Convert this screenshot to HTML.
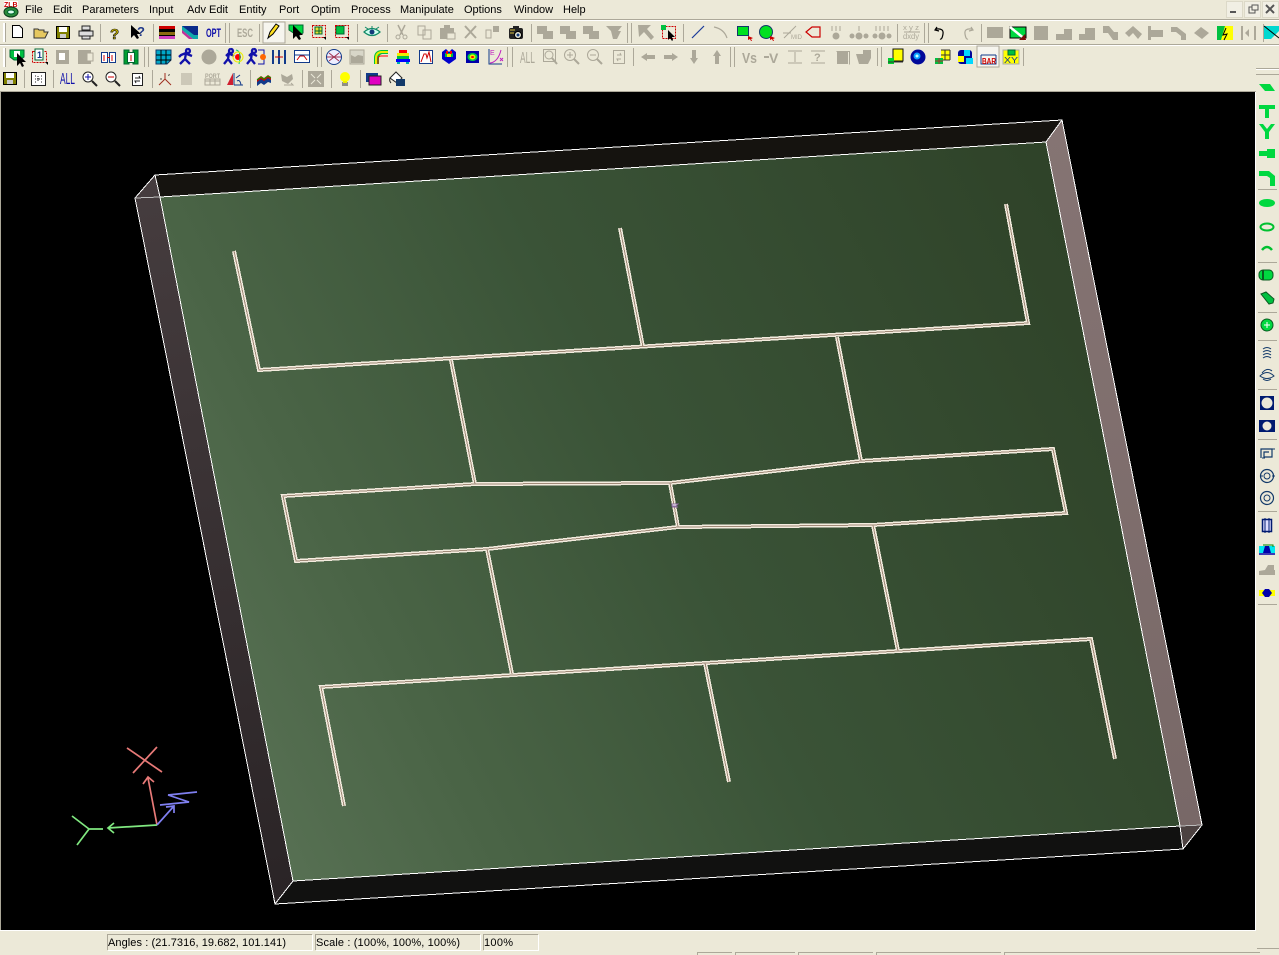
<!DOCTYPE html>
<html><head><meta charset="utf-8"><title>ZLB</title>
<style>
html,body{margin:0;padding:0;background:#ece9d8;overflow:hidden}
svg{display:block;position:absolute;left:0;top:0}
text{font-family:"Liberation Sans",sans-serif}
.m text{font-size:11px;fill:#000}
</style></head><body>
<svg width="1279" height="955" viewBox="0 0 1279 955" xmlns="http://www.w3.org/2000/svg">
<defs>
<linearGradient id="fg" gradientUnits="userSpaceOnUse" x1="200" y1="880" x2="1150" y2="400">
<stop offset="0" stop-color="#5c7558"/><stop offset=".26" stop-color="#4a6446"/><stop offset=".55" stop-color="#3a5337"/><stop offset="1" stop-color="#2f4329"/></linearGradient>
<linearGradient id="lw" gradientUnits="userSpaceOnUse" x1="140" y1="200" x2="280" y2="900"><stop offset="0" stop-color="#453c3e"/><stop offset="1" stop-color="#2a2426"/></linearGradient>
<linearGradient id="rw" gradientUnits="userSpaceOnUse" x1="1050" y1="130" x2="1190" y2="830"><stop offset="0" stop-color="#857473"/><stop offset="1" stop-color="#786867"/></linearGradient>
</defs>
<rect width="1279" height="955" fill="#ece9d8"/>
<!-- menu -->
<g class="m">
<text x="25" y="13">File</text><text x="53" y="13">Edit</text><text x="82" y="13">Parameters</text><text x="149" y="13">Input</text><text x="187" y="13">Adv Edit</text><text x="239" y="13">Entity</text><text x="279" y="13">Port</text><text x="311" y="13">Optim</text><text x="351" y="13">Process</text><text x="400" y="13">Manipulate</text><text x="464" y="13">Options</text><text x="514" y="13">Window</text><text x="563" y="13">Help</text>
</g>
<!-- logo -->
<g><rect x="4" y="1" width="14" height="6" fill="#fff"/><text x="4" y="7" font-size="7" font-weight="bold" fill="#c00">ZLB</text>
<ellipse cx="11" cy="12" rx="7" ry="5" fill="#2a8a3a" stroke="#0a3a1a"/><ellipse cx="11" cy="12" rx="3.5" ry="2" fill="#dfe" stroke="#063"/></g>
<!-- window buttons -->
<g shape-rendering="crispEdges"><rect x="1226.500" y="1.500" width="16" height="16" fill="#f1efe4" stroke="#dcd9c8"/><rect x="1244.500" y="1.500" width="16" height="16" fill="#f1efe4" stroke="#dcd9c8"/><rect x="1262.500" y="1.500" width="16" height="16" fill="#f1efe4" stroke="#dcd9c8"/>
<rect x="1230" y="11" width="6" height="2" fill="#555"/>
<rect x="1249" y="7" width="6" height="6" fill="none" stroke="#555"/><rect x="1252" y="5" width="6" height="5" fill="#f1efe4" stroke="#555"/></g>
<path d="M1266 5l8 8M1274 5l-8 8" stroke="#555" stroke-width="2"/>
<!-- bars -->
<g shape-rendering="crispEdges">
<rect x="0" y="19" width="1279" height="1" fill="#aca899"/><rect x="0" y="20" width="1279" height="1" fill="#fff"/>
<rect x="0" y="44" width="1279" height="1" fill="#aca899"/><rect x="0" y="45" width="1279" height="1" fill="#fff"/>
<rect x="1256" y="68" width="23" height="1" fill="#aca899"/><rect x="1256" y="69" width="23" height="1" fill="#fff"/>
<rect x="1256" y="74" width="23" height="1" fill="#aca899"/>
<!-- grips & seps -->
<g fill="#fff">
<rect x="3" y="23" width="2" height="19"/><rect x="3" y="48" width="2" height="19"/>
</g>
<g fill="#aca899">
<rect x="5" y="23" width="1" height="19"/><rect x="5" y="48" width="1" height="19"/>
<rect x="100" y="24" width="1" height="18"/><rect x="153" y="24" width="1" height="18"/><rect x="225" y="23" width="1" height="20"/><rect x="229" y="23" width="1" height="20"/><rect x="259" y="24" width="1" height="18"/><rect x="357" y="24" width="1" height="18"/><rect x="387" y="24" width="1" height="18"/><rect x="531" y="24" width="1" height="18"/><rect x="627" y="23" width="1" height="20"/><rect x="631" y="23" width="1" height="20"/><rect x="683" y="24" width="1" height="18"/><rect x="897" y="24" width="1" height="18"/><rect x="924" y="23" width="1" height="20"/><rect x="928" y="23" width="1" height="20"/><rect x="981" y="24" width="1" height="18"/><rect x="1263" y="24" width="1" height="18"/>
<rect x="144" y="47" width="1" height="20"/><rect x="148" y="47" width="1" height="20"/><rect x="317" y="47" width="1" height="20"/><rect x="321" y="47" width="1" height="20"/><rect x="507" y="47" width="1" height="20"/><rect x="512" y="47" width="1" height="20"/><rect x="633" y="48" width="1" height="18"/><rect x="730" y="47" width="1" height="20"/><rect x="734" y="47" width="1" height="20"/><rect x="877" y="48" width="1" height="18"/><rect x="881" y="47" width="1" height="20"/><rect x="1023" y="48" width="1" height="18"/>
<rect x="24" y="70" width="1" height="18"/><rect x="53" y="70" width="1" height="18"/><rect x="152" y="70" width="1" height="18"/><rect x="250" y="70" width="1" height="18"/><rect x="302" y="70" width="1" height="18"/><rect x="331" y="70" width="1" height="18"/><rect x="360" y="70" width="1" height="18"/>
</g>
<!-- pressed buttons -->
<rect x="263" y="22" width="22" height="21" fill="#f6f5ee" stroke="#aca899"/>
<rect x="977" y="46" width="22" height="21" fill="#f6f5ee" stroke="#aca899"/>
</g>
<!-- ROW 1 -->
<g stroke-linejoin="miter">
<path d="M12.5 25.5h7l3 3v9h-10z" fill="#fff" stroke="#000"/>
<path d="M34 37v-8h4l1 1h5v2h4l-3 6H34z" fill="#e6c860" stroke="#333"/>
<g shape-rendering="crispEdges"><rect x="56.5" y="26.5" width="13" height="12" fill="#808000" stroke="#000"/><rect x="59" y="27" width="8" height="5" fill="#fff"/><rect x="60" y="34" width="6" height="4" fill="#ccc"/></g>
<path d="M82 26h8v4h-8zM79 31h14v5H79zM82 36h8v3h-8z" fill="#ddd" stroke="#222"/>
<text x="110" y="39" font-size="15" font-weight="bold" fill="#c8b400" stroke="#000" stroke-width=".6">?</text>
<path d="M131 25v13l3-3 3 4 2-1-2-4h4z" fill="#000"/><text x="137" y="36" font-size="13" font-weight="bold" fill="#223a8a">?</text>
<g shape-rendering="crispEdges"><rect x="159" y="26" width="16" height="3" fill="#c00"/><rect x="159" y="29" width="16" height="3" fill="#000"/><rect x="159" y="32" width="16" height="3" fill="#8a6a10"/><rect x="159" y="35" width="16" height="1" fill="#000"/><rect x="159" y="36" width="16" height="3" fill="#d040c0"/></g>
<path d="M182 26h16v13h-4l-12-9z" fill="#0a2a8a"/><path d="M182 26l12 9h4v4h-5l-11-9z" fill="#1aa"/><path d="M182 30l11 9-4 0-7-6z" fill="#c0309a"/>
<text x="206" y="37" font-size="12" font-weight="bold" fill="#11a" textLength="15" lengthAdjust="spacingAndGlyphs">OPT</text>
<text x="237" y="37" font-size="12" font-weight="bold" fill="#aca899" textLength="16" lengthAdjust="spacingAndGlyphs">ESC</text>
<path d="M268 38l2-6 6-8 3 2-6 8z" fill="#ffe020" stroke="#000"/>
<path d="M289 25h14v8l-5 3-9-6z" fill="#00d840" stroke="#063"/><path d="M293 25v14l3-3 3 4 2-1-2-4h4z" fill="#000"/>
<rect x="312.500" y="25.500" width="13" height="12" fill="#fff0" stroke="#c00" stroke-dasharray="2 1"/><rect x="315" y="27" width="7" height="7" fill="#e8e030" stroke="#063"/><path d="M319 27v7M315 31h7" stroke="#063"/><path d="M326 40l-3-3h3z" fill="#000"/>
<rect x="336" y="26" width="8" height="8" fill="#00c040" stroke="#063"/><rect x="335.500" y="25.500" width="13" height="12" fill="none" stroke="#c00" stroke-dasharray="2 1"/><path d="M349 40l-3-3h3z" fill="#000"/>
<path d="M364 32q8-7 16 0q-8 7-16 0z" fill="#cfe" stroke="#186" stroke-width="1.200"/><circle cx="372" cy="32" r="2.500" fill="#123a7a"/><path d="M365 27l3 2M372 26v2M379 27l-3 2" stroke="#186"/>
<path d="M398 25l5 10M405 25l-5 10" stroke="#aca899" stroke-width="1.500"/><circle cx="398" cy="37" r="2" fill="none" stroke="#aca899"/><circle cx="405" cy="37" r="2" fill="none" stroke="#aca899"/>
<path d="M418 26h7v9h-7zM423 30h8v9h-8z" fill="#ece9d8" stroke="#aca899"/>
<path d="M440 28h14v11h-14z" fill="#aca899"/><rect x="444" y="25" width="6" height="4" fill="#aca899"/><rect x="447" y="33" width="8" height="6" fill="#ece9d8" stroke="#aca899"/>
<path d="M465 26l11 12M476 26l-11 12" stroke="#aca899" stroke-width="2"/>
<rect x="486" y="30" width="5" height="8" fill="none" stroke="#aca899"/><rect x="493" y="26" width="6" height="6" fill="#aca899"/>
<rect x="509" y="28" width="14" height="11" rx="2" fill="#222"/><rect x="513" y="26" width="6" height="3" fill="#222"/><circle cx="518" cy="35" r="3.500" fill="#e8e8d8" stroke="#000"/><circle cx="518" cy="35" r="1.500" fill="#123a7a"/><path d="M510 30h5M510 33h4" stroke="#d8c040"/>
<g fill="#aca899"><path d="M537 26h10v5h6v8h-10v-5h-6z"/><path d="M560 26h10v5h6v8h-10v-5h-6z"/><path d="M583 26h10v5h6v8h-10v-5h-6z"/><path d="M606 26h16l-4 5h3l-4 8h-4l-2-8z"/></g>
<path d="M638 25h13l-4 4 7 8-3 3-7-8-5 5z" fill="#aca899"/>
<rect x="662.500" y="26.500" width="13" height="12" fill="none" stroke="#c00" stroke-dasharray="2 1"/><rect x="661" y="25" width="5" height="5" fill="#00c040"/><path d="M668 30v10l2-2 2 3 1-1-1-3h3z" fill="#000"/>
<path d="M692 38l12-12" stroke="#1a3a9a" stroke-width="1.200"/>
<path d="M714 27q10 2 13 11" fill="none" stroke="#aca899" stroke-width="1.200"/>
<rect x="737.500" y="26.500" width="11" height="9" fill="#00e020" stroke="#123a6a"/><path d="M748 36l5 2-2 1 1 2-1 0-1-2-2 1z" fill="#c00"/>
<circle cx="766" cy="32" r="6.500" fill="#00e020" stroke="#123a6a"/><path d="M770 36l5 2-2 1 1 2-1 0-1-2-2 1z" fill="#c00"/>
<path d="M784 38l12-12M783 33l8 0" stroke="#aca899"/><text x="791" y="39" font-size="6" fill="#aca899">MID</text>
<path d="M806 32l6-5h8v10h-8z" fill="none" stroke="#c00" stroke-width="1.200"/>
<g fill="#aca899"><circle cx="836" cy="36" r="3.500"/><circle cx="859" cy="36" r="3.500"/><circle cx="852" cy="36" r="2.500"/><circle cx="866" cy="36" r="2.500"/><circle cx="882" cy="36" r="3.500"/><circle cx="875" cy="36" r="2.500"/><circle cx="889" cy="36" r="2.500"/></g>
<path d="M832 26v5M836 26v5M840 26v5M859 26v5M876 26v5M880 26v5M884 26v5M888 26v5" stroke="#aca899"/>
<text x="903" y="30" font-size="7" fill="#aca899" textLength="16" lengthAdjust="spacingAndGlyphs">x y z</text><text x="903" y="39" font-size="8" fill="#aca899" textLength="16" lengthAdjust="spacingAndGlyphs">dxdy</text><path d="M904 32h16" stroke="#aca899"/>
<path d="M937 27l-2 3 4 1M936 29q8-1 7 5t-3 5" fill="none" stroke="#000" stroke-width="1.200"/>
<path d="M971 27l2 3-4 1M972 29q-8-1-7 5t3 5" fill="none" stroke="#aca899" stroke-width="1.200"/>
<g fill="#aca899" shape-rendering="crispEdges"><rect x="987" y="27" width="16" height="11"/><rect x="1034" y="26" width="14" height="14"/></g>
<rect x="1010" y="27" width="16" height="11" fill="#00d840" stroke="#000"/><path d="M1010 27l16 13" stroke="#fff" stroke-width="2.500"/><path d="M1019 40l6-6 1 6z" fill="#7a0a0a"/>
<g fill="#aca899"><path d="M1056 40v-6h8v-5h8v11z"/><path d="M1079 40v-6h6v-6h10v12z"/><path d="M1103 26h6l5 6h4v8h-5l-5-7h-5z"/><path d="M1125 33l8-7 9 8-4 5-5-6-4 4z"/><path d="M1148 26h3v4h12v7h-12v3h-3z"/><path d="M1171 27h6l9 7v6h-5v-4l-5-4h-5z"/><path d="M1194 33l7-6 8 6-7 6z"/><path d="M1241 26h2v14h-2zM1254 26h2v14h-2zM1245 33l4-4v8z"/></g>
<rect x="1217" y="26" width="16" height="14" fill="#ff0"/><path d="M1217 26h8l-4 14h-4z" fill="#00c040"/><path d="M1226 28l-3 7 4-1-3 6" fill="none" stroke="#000"/>
<path d="M1264 26h15v5l-8 8h-7z" fill="#00d8d0"/><path d="M1264 26l15 12" stroke="#000"/>
</g>
<!-- ROW 2 -->
<g>
<path d="M10 50h14v7l-4 3h-6l-4-3z" fill="#00c040" stroke="#063"/><rect x="14" y="51" width="6" height="6" fill="#fff"/><path d="M17 53v13l3-3 2 4 2-1-2-4h4z" fill="#000"/>
<rect x="32.500" y="51.500" width="14" height="11" fill="none" stroke="#c00" stroke-dasharray="2 1"/><rect x="35" y="49" width="8" height="11" fill="#fff" stroke="#063"/><text x="37" y="58" font-size="9" font-weight="bold" fill="#123a8a">1</text><path d="M48 65l-3-3h3z" fill="#000"/>
<rect x="56" y="50" width="13" height="14" fill="#aca899"/><rect x="59" y="53" width="6" height="7" fill="#fff"/>
<rect x="78" y="50" width="13" height="14" fill="#aca899"/><rect x="87" y="53" width="6" height="8" fill="#ece9d8" stroke="#aca899"/>
<rect x="101.500" y="52.500" width="6" height="10" fill="#fff" stroke="#123a8a"/><rect x="109.500" y="52.500" width="6" height="10" fill="#fff" stroke="#123a8a"/><path d="M104 55v6M112 55v6M107 57.500h3" stroke="#c00"/>
<rect x="124" y="50" width="5" height="14" fill="#00a030" stroke="#063"/><rect x="133" y="50" width="5" height="14" fill="#00a030" stroke="#063"/><rect x="127.500" y="52.500" width="7" height="10" fill="#fff" stroke="#063"/><path d="M131 55v6" stroke="#c00"/>
<path d="M156 50h15v10l-4 4h-11z" fill="#00a8c8" stroke="#123a6a"/><path d="M161 50v14M166 50v14M156 55h15M156 60h15" stroke="#000"/>
<path d="M188 49a2 2 0 1 1-.1 0M186 53l-5 2-2 2M186 53l-1 6-5 5M185 59l5 5M187 54l5 2" fill="none" stroke="#11a" stroke-width="2.300"/>
<circle cx="209" cy="57" r="7.500" fill="#aca899"/>
<path d="M231 49a2 2 0 1 1-.1 0M229 53l-3 3M229 53l-1 6-4 5M228 59l4 5M230 54l4 2" fill="none" stroke="#11a" stroke-width="2.300"/><circle cx="238" cy="57" r="3" fill="#f00"/><path d="M236 50q6 1 3 14" fill="none" stroke="#0c6"/><circle cx="238" cy="57" r="5" fill="none" stroke="#ee0"/>
<path d="M254 49a2 2 0 1 1-.1 0M252 53l-3 3M252 53l-1 6-4 5M251 59l4 5M253 54l4 2" fill="none" stroke="#11a" stroke-width="2.300"/><path d="M258 50h6v14h-6" fill="none" stroke="#11a"/><circle cx="263" cy="57" r="3" fill="#f60"/>
<path d="M273 50v14M279 50v14M285 50v14" stroke="#123a8a" stroke-width="2"/><path d="M275 57h8" stroke="#c00"/>
<rect x="294.500" y="50.500" width="15" height="12" fill="#fff" stroke="#123a8a"/><path d="M294 55h16" stroke="#123a8a"/><path d="M297 60l3-4h4l3 4" fill="none" stroke="#c00"/>
<circle cx="334" cy="57" r="7.500" fill="#eef" stroke="#123a8a"/><path d="M327 57h14M329 53l5 4-5 4M339 53l-5 4 5 4" fill="none" stroke="#a03050"/>
<rect x="350" y="50" width="14" height="14" fill="#d8d6c8" stroke="#aca899"/><path d="M351 55l4 2 3-2 5 1v7h-12z" fill="#aca899"/>
<path d="M374 64v-6q0-7 7-8h7v4h-6q-3 1-3 4v6z" fill="#00c040"/><path d="M376 64v-6q0-5 5-6h7" fill="none" stroke="#ee0" stroke-width="2"/><path d="M378 64v-5q0-3 3-3h7" fill="none" stroke="#f00"/>
<path d="M399 50h8v3h-8z" fill="#f00"/><path d="M397 53h12v3h-12z" fill="#ee0"/><path d="M397 56h12v3h-12z" fill="#00c040"/><path d="M396 59h14v3h-14z" fill="#00f"/><path d="M397 62h3v2h-3zM406 62h3v2h-3z" fill="#0aa"/>
<rect x="419.500" y="50.500" width="13" height="13" fill="#fff" stroke="#123a8a"/><path d="M421 62l3-8h2l1 4 2-6 2 10" fill="none" stroke="#c00"/>
<path d="M442 52l4-3 3 3 3-3 4 3v7l-7 5-7-5z" fill="#00c"/><path d="M445 53h8v4h-8z" fill="#00c040"/><path d="M446 51h2v3h-2zM450 51h2v3h-2z" fill="#f00"/><rect x="447" y="54" width="4" height="3" fill="#ee0"/>
<rect x="466" y="51" width="13" height="12" fill="#00a"/><ellipse cx="472.500" cy="57" rx="5" ry="4" fill="#0c4"/><ellipse cx="472.500" cy="57" rx="3" ry="2.500" fill="#ee0"/><ellipse cx="472.500" cy="57" rx="1.500" ry="1" fill="#f00"/>
<path d="M489 49v15h13" fill="none" stroke="#123a8a"/><path d="M490 63q8-1 11-13" fill="none" stroke="#c020c0"/><text x="490" y="55" font-size="7" fill="#c020c0">E</text><path d="M500 58l3 3M503 58l-3 3" stroke="#c020c0"/>
<text x="520" y="63" font-size="16" fill="#aca899" textLength="15" lengthAdjust="spacingAndGlyphs">ALL</text>
<rect x="543.500" y="49.500" width="12" height="12" fill="none" stroke="#aca899"/><circle cx="549" cy="55" r="4" fill="none" stroke="#aca899"/><path d="M552 58l5 6" stroke="#aca899" stroke-width="2"/>
<circle cx="570" cy="55" r="5.500" fill="none" stroke="#aca899"/><path d="M574 59l5 5" stroke="#aca899" stroke-width="2"/><path d="M567 55h6M570 52v6" stroke="#aca899"/>
<circle cx="593" cy="55" r="5.500" fill="none" stroke="#aca899"/><path d="M597 59l5 5" stroke="#aca899" stroke-width="2"/><path d="M590 55h6" stroke="#aca899"/>
<rect x="613.500" y="50.500" width="11" height="13" fill="none" stroke="#aca899"/><path d="M617 55h4l-1-2M621 59h-4l1 2" fill="none" stroke="#aca899"/>
<path d="M641 57l6-4v2h8v4h-8v2z" fill="#aca899"/><path d="M678 57l-6-4v2h-8v4h8v2z" fill="#aca899"/><path d="M694 64l-4-6h2v-8h4v8h2z" fill="#aca899"/><path d="M717 50l-4 6h2v8h4v-8h2z" fill="#aca899"/>
<text x="742" y="63" font-size="15" font-weight="bold" fill="#aca899" textLength="15" lengthAdjust="spacingAndGlyphs">Vs</text>
<path d="M764 57h5" stroke="#aca899" stroke-width="2"/><text x="769" y="63" font-size="14" font-weight="bold" fill="#aca899">V</text>
<path d="M788 51h14M788 63h14M795 52v10" stroke="#aca899"/><path d="M811 51h14M811 63h14" stroke="#aca899"/><text x="814" y="61" font-size="11" font-weight="bold" fill="#aca899">?</text>
<path d="M836.500 51.500h13v13" fill="none" stroke="#aca899"/><rect x="837" y="52" width="11" height="12" fill="#aca899"/>
<path d="M856 54h7v-4h8v8l-3 6h-9z" fill="#aca899"/>
<rect x="893" y="49" width="10" height="12" fill="#ff0" stroke="#111"/><rect x="888" y="58" width="6" height="6" fill="#00d030"/><path d="M888 62h15" stroke="#333"/>
<circle cx="918" cy="57" r="7.500" fill="#00089a"/><circle cx="917" cy="56" r="3.500" fill="#0aa0ff"/><circle cx="917" cy="56" r="1.500" fill="#cff"/>
<rect x="941" y="50" width="9" height="10" fill="#ff0"/><path d="M941 50h9M941 55h9M945 50v10M950 50v10M941 60h9" stroke="#333" fill="none"/><rect x="935" y="58" width="8" height="6" fill="#00c040"/><path d="M935 61h8M939 58v6" stroke="#a33"/>
<rect x="958" y="50" width="14" height="14" fill="#00089a" rx="3"/><rect x="964" y="50" width="6" height="6" fill="#00d8ff"/><rect x="958" y="56" width="6" height="6" fill="#ff0"/><rect x="966" y="58" width="7" height="6" fill="#00d8ff"/>
<g><path d="M981 55h15M981 55v9h15v-9" fill="none" stroke="#123a8a"/><text x="982" y="64" font-size="8" font-weight="bold" fill="#c00" textLength="14" lengthAdjust="spacingAndGlyphs">BAR</text></g>
<rect x="1003" y="50" width="16" height="14" fill="#ff0" stroke="#aaa"/><rect x="1008" y="50" width="7" height="5" fill="#00c040" stroke="#063"/><text x="1004" y="63" font-size="8" fill="#123a8a" textLength="14" lengthAdjust="spacingAndGlyphs">XY</text>
</g>
<!-- ROW 3 -->
<g>
<g shape-rendering="crispEdges"><rect x="3.500" y="72.500" width="13" height="12" fill="#808000" stroke="#000"/><rect x="6" y="73" width="8" height="5" fill="#fff"/><rect x="7" y="80" width="6" height="4" fill="#ccc"/></g>
<rect x="31.500" y="72.500" width="14" height="13" fill="#fff" stroke="#222"/><path d="M35 76h1M41 76h1M38 79h1M35 82h1M41 82h1M38 76v6M35 79h7" stroke="#222" stroke-dasharray="1 1"/>
<text x="60" y="84" font-size="16" fill="#11a" textLength="15" lengthAdjust="spacingAndGlyphs">ALL</text>
<circle cx="88" cy="77" r="5" fill="#fff" stroke="#222"/><path d="M85 77h6M88 74v6" stroke="#11a"/><path d="M92 81l5 5" stroke="#222" stroke-width="2"/>
<circle cx="111" cy="77" r="5" fill="#fff" stroke="#222"/><path d="M108 77h6" stroke="#c00"/><path d="M115 81l5 5" stroke="#222" stroke-width="2"/>
<rect x="132.500" y="73.500" width="10" height="12" fill="#fff" stroke="#222"/><path d="M135 78h5l-1-2M140 81h-5l1 2" fill="none" stroke="#222"/>
<path d="M165 79v-6M165 79l-6 6M165 79l6 6" stroke="#a03020" fill="none"/><text x="160" y="80" font-size="4" fill="#000">x</text><text x="168" y="76" font-size="4" fill="#000">z</text>
<path d="M181 74h11M181 76h11M181 78h11M181 80h11M181 82h11M181 84h11" stroke="#aca899"/>
<text x="205" y="78" font-size="6" font-weight="bold" fill="#aca899" textLength="15" lengthAdjust="spacingAndGlyphs">PORT</text><path d="M205 79h15v6h-15zM205 81h15M210 79v6M215 79v6" fill="none" stroke="#aca899"/>
<path d="M227 85l6-12v12z" fill="#d02030"/><path d="M234 85v-12M234 85h9M236 78l4-3M237 81q3-2 4 4" fill="none" stroke="#123a8a"/>
<path d="M257 79l4-3 3 2 4-3 3 2v3l-3-1-4 3-3-2-4 3z" fill="#c00"/><path d="M257 82l4-3 3 2 4-3 3 2v3l-3-1-4 3-3-2-4 3z" fill="#123a8a"/><path d="M257 80l4-3 3 2 4-3 3 2" fill="none" stroke="#0a0"/>
<path d="M281 74l6 3 5-3 1 5-5 5-6-3z" fill="#aca899"/><path d="M284 85h9l-2-2" fill="none" stroke="#aca899"/>
<rect x="308" y="71" width="16" height="16" fill="#aca899"/><path d="M311 74l4 4M321 74l-4 4M311 84l4-4M321 84l-4-4" stroke="#ece9d8"/>
<circle cx="345" cy="77" r="5" fill="#ff0"/><path d="M342 83h6M342 85h6" stroke="#333"/><rect x="343" y="81" width="4" height="2" fill="#ee0"/>
<rect x="366" y="73" width="12" height="9" fill="#123a8a"/><rect x="369" y="76" width="12" height="9" fill="#e000c0" stroke="#222"/>
<path d="M390 78l6-6 6 6-5 5z" fill="#fff" stroke="#222"/><rect x="396" y="79" width="9" height="7" fill="#123a6a"/><path d="M390 78q-1 3 1 5" fill="none" stroke="#222"/>
</g>
<!-- RIGHT COLUMN -->
<g>
<path d="M1259 84h11l5 7h-10z" fill="#00d840"/>
<path d="M1259 105h16v4h-6v9h-4v-9h-6z" fill="#00d840"/>
<path d="M1259 124h4l4 5 4-5h4l-6 8v7h-4v-7z" fill="#00d840"/>
<path d="M1259 151h8v-2h8v9h-8v-2h-8z" fill="#00d840"/>
<path d="M1259 171h10l6 5v10h-5v-8l-3-2h-8z" fill="#00d840"/>
<ellipse cx="1267" cy="203" rx="8" ry="4" fill="#00d840"/>
<ellipse cx="1267" cy="227" rx="6.500" ry="3.500" fill="none" stroke="#00c030" stroke-width="2"/>
<path d="M1262 250q5-6 10 0" fill="none" stroke="#00c030" stroke-width="2.500"/>
<rect x="1259" y="270" width="14" height="10" rx="4" fill="#00d840" stroke="#0a5a20"/><path d="M1263 270v10" stroke="#0a5a20" stroke-width="2"/>
<path d="M1261 294l5-2 8 7-1 4-4 1z" fill="#00c040" stroke="#0a5a20"/>
<circle cx="1267" cy="325" r="6" fill="#00d840" stroke="#0a5a20"/><path d="M1264 325h6M1267 322v6" stroke="#fff"/>
<path d="M1263 349q4-3 8 0M1263 352q4-3 8 0M1263 355q4-3 8 0M1263 358q4-3 8 0" fill="none" stroke="#123a6a"/>
<path d="M1260 376q7-7 14 0q-7 5-14 0zM1262 373q5-6 10-2M1263 379q4 3 8 0" fill="none" stroke="#123a6a"/>
<rect x="1260" y="396" width="14" height="14" fill="#001a70"/><circle cx="1267" cy="403" r="5.500" fill="#ece9d8"/>
<rect x="1259" y="420" width="16" height="12" fill="#001a70"/><circle cx="1267" cy="426" r="4.500" fill="#ece9d8"/>
<path d="M1261 458v-9h11v8h-8v-5h5" fill="none" stroke="#123a6a" stroke-width="1.200"/><path d="M1262 458h3M1272 449h3" stroke="#123a6a"/>
<circle cx="1267" cy="476" r="6.500" fill="none" stroke="#123a6a" stroke-width="1.200"/><circle cx="1267" cy="476" r="3" fill="none" stroke="#123a6a"/><path d="M1260 476h3M1272 476h3" stroke="#123a6a"/>
<circle cx="1267" cy="498" r="6.500" fill="none" stroke="#123a6a" stroke-width="1.200"/><circle cx="1267" cy="498" r="3" fill="none" stroke="#123a6a"/>
<rect x="1262.500" y="519.500" width="9" height="12" fill="#ddf" stroke="#001a70" stroke-width="1.500"/><path d="M1265 518v15M1269 518v15" stroke="#001a70"/>
<rect x="1259" y="546" width="16" height="7" fill="#00e8f0"/><path d="M1263 553l2-7h4l2 7z" fill="#00a"/><path d="M1263 545h10v2" fill="none" stroke="#080"/><path d="M1259 554h16" stroke="#00a" stroke-width="1.500"/>
<path d="M1259 575v-4l6-1 3-5h6v5h1v5z" fill="#aca899"/>
<rect x="1259" y="590" width="16" height="6" fill="#ff0"/><path d="M1262 593l3-4h4l3 4-3 4h-4z" fill="#00a"/>
<g shape-rendering="crispEdges" fill="#aca899"><rect x="1258" y="189" width="19" height="1"/><rect x="1258" y="262" width="19" height="1"/><rect x="1258" y="312" width="19" height="1"/><rect x="1258" y="340" width="19" height="1"/><rect x="1258" y="389" width="19" height="1"/><rect x="1258" y="439" width="19" height="1"/><rect x="1258" y="511" width="19" height="1"/><rect x="1258" y="604" width="19" height="1"/><rect x="1257" y="948" width="22" height="1"/></g>
</g>
<!-- VIEWPORT -->
<rect x="0" y="91" width="1256" height="1" fill="#aca899" shape-rendering="crispEdges"/>
<rect x="0" y="92" width="1255" height="838" fill="#000" shape-rendering="crispEdges"/>
<rect x="0" y="92" width="1" height="838" fill="#aca899" shape-rendering="crispEdges"/>
<rect x="0" y="930" width="1256" height="1" fill="#fff" shape-rendering="crispEdges"/>
<rect x="1255" y="92" width="1" height="839" fill="#fff" shape-rendering="crispEdges"/>
<!-- box -->
<polygon points="155,175 1062,120 1046,142 160,197" fill="#15130f"/>
<polygon points="293,881 1180,826 1183,849 275,904" fill="#111110"/>
<polygon points="135,198 155,175 160,197 293,881 275,904" fill="url(#lw)"/>
<polygon points="1046,142 1062,120 1202,825 1180,826" fill="url(#rw)"/>
<polygon points="1180,826 1202,825 1183,849" fill="#4c4241"/>
<polygon points="160,197 1046,142 1180,826 293,881" fill="url(#fg)"/>
<g fill="none" stroke="#fff" stroke-width="1" shape-rendering="crispEdges">
<path d="M135 198L155 175L1062 120L1202 825L1183 849L275 904Z"/>
<path d="M155 175L160 197L293 881L1180 826L1046 142L160 197"/>
<path d="M1046 142L1062 120M293 881L275 904M1180 826L1183 849"/>
</g>
<path d="M135 198L160 197M1180 826L1202 825" stroke="#bbb" fill="none" shape-rendering="crispEdges"/>
<!-- traces -->
<g fill="none" stroke-linejoin="miter" shape-rendering="crispEdges">
<g stroke="#f4ecdf" stroke-width="4">
<path d="M234 251L259 370L1028 323L1006 204"/>
<path d="M620 228L643 347M451 360L475 484M837 337L861 461"/>
<path d="M283 496L475 484L670 483L861 461L1053 449L1066 513L873 525L678 527L487 549L296 561Z"/>
<path d="M670 483L678 527M873 525L898 651M487 549L512 674"/>
<path d="M344 806L321 687L1091 639L1115 759M705 663L729 782"/>
</g>
<g stroke="#a08a78" stroke-width="1">
<path d="M234 251L259 370L1028 323L1006 204"/>
<path d="M620 228L643 347M451 360L475 484M837 337L861 461"/>
<path d="M283 496L475 484L670 483L861 461L1053 449L1066 513L873 525L678 527L487 549L296 561Z"/>
<path d="M670 483L678 527M873 525L898 651M487 549L512 674"/>
<path d="M344 806L321 687L1091 639L1115 759M705 663L729 782"/>
</g>
</g>
<path d="M672 504h6l-2 2h-4zM672 507h6" stroke="#8a6aa0" fill="#fff"/>
<!-- axes -->
<g fill="none" stroke-width="1.700">
<g stroke="#e87a78"><path d="M157 825L148 778M143 784L148 777L154 782M127 748L162 772M157 747L133 773"/></g>
<g stroke="#80e880"><path d="M157 825L108 828M114 823L108 828L114 833M103 829L89 829M72 816L89 829L77 845"/></g>
<g stroke="#7f7ff0"><path d="M157 825L174 806M166 807L174 806L174 813M168 795L197 792M168 795L189 802L160 805"/></g>
</g>
<!-- status bar -->
<g shape-rendering="crispEdges" fill="none">
<path d="M107.500 950V934.500H312M315.500 950V934.500H480M483.500 950V934.500H538" stroke="#aca899"/>
<path d="M108 950.500H312.500V935M316 950.500H480.500V935M484 950.500H538.500V935" stroke="#fff"/>
<path d="M697.500 955V952.500H732M735.500 955V952.500H795M798.500 955V952.500H873M876.500 955V952.500H1001M1004.500 955V952.500H1260" stroke="#aca899"/>
</g>
<g class="m">
<text x="108" y="946" textLength="178">Angles : (21.7316, 19.682, 101.141)</text>
<text x="316" y="946" textLength="144">Scale : (100%, 100%, 100%)</text>
<text x="484" y="946" textLength="29">100%</text>
</g>
</svg>
</body></html>
